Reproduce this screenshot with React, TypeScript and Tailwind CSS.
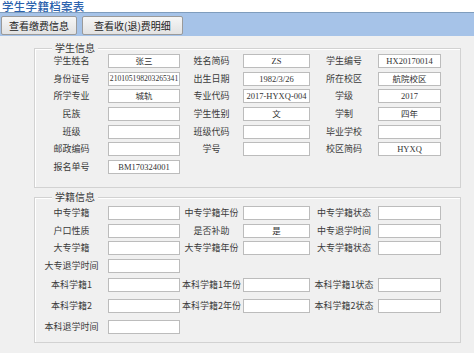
import React from 'react';

type Cell = { label: string; value?: string; small?: boolean };
type Row = { cells: Cell[]; mt?: string };

const STUDENT_ROWS: Row[] = [
  { cells: [{ label: '学生姓名', value: '张三' }, { label: '姓名简码', value: 'ZS' }, { label: '学生编号', value: 'HX20170014' }] },
  { cells: [{ label: '身份证号', value: '210105198203265341', small: true }, { label: '出生日期', value: '1982/3/26' }, { label: '所在校区', value: '航院校区' }], mt: 'mt-[4px]' },
  { cells: [{ label: '所学专业', value: '城轨' }, { label: '专业代码', value: '2017-HYXQ-004' }, { label: '学级', value: '2017' }], mt: 'mt-[3px]' },
  { cells: [{ label: '民族', value: '' }, { label: '学生性别', value: '文' }, { label: '学制', value: '四年' }], mt: 'mt-[4px]' },
  { cells: [{ label: '班级', value: '' }, { label: '班级代码', value: '' }, { label: '毕业学校', value: '' }], mt: 'mt-[4px]' },
  { cells: [{ label: '邮政编码', value: '' }, { label: '学号', value: '' }, { label: '校区简码', value: 'HYXQ' }], mt: 'mt-[3px]' },
  { cells: [{ label: '报名单号', value: 'BM170324001' }], mt: 'mt-[4px]' },
];

const STATUS_ROWS: Row[] = [
  { cells: [{ label: '中专学籍', value: '' }, { label: '中专学籍年份', value: '' }, { label: '中专学籍状态', value: '' }] },
  { cells: [{ label: '户口性质', value: '' }, { label: '是否补助', value: '是' }, { label: '中专退学时间', value: '' }], mt: 'mt-[4px]' },
  { cells: [{ label: '大专学籍', value: '' }, { label: '大专学籍年份', value: '' }, { label: '大专学籍状态', value: '' }], mt: 'mt-[3px]' },
  { cells: [{ label: '大专退学时间', value: '' }], mt: 'mt-[4px]' },
  { cells: [{ label: '本科学籍1', value: '' }, { label: '本科学籍1年份', value: '' }, { label: '本科学籍1状态', value: '' }], mt: 'mt-[5px]' },
  { cells: [{ label: '本科学籍2', value: '' }, { label: '本科学籍2年份', value: '' }, { label: '本科学籍2状态', value: '' }], mt: 'mt-[7px]' },
  { cells: [{ label: '本科退学时间', value: '' }], mt: 'mt-[7px]' },
];

const LABEL_W = ['w-[73px]', 'w-[63px]', 'w-[68px]'];
const INPUT_W = ['w-[72px]', 'w-[67px]', 'w-[63px]'];

function FormRow({ row }: { row: Row }) {
  return (
    <div className={`flex h-[14px] items-stretch ${row.mt ?? ''}`}>
      {row.cells.map((c, i) => (
        <React.Fragment key={c.label}>
          <div className={`${LABEL_W[i]} flex items-center justify-center whitespace-nowrap text-[9px] text-[#3a3a3a]`}>
            {c.label}
          </div>
          <div
            className={`${INPUT_W[i]} flex items-center justify-center overflow-hidden whitespace-nowrap border border-[#bcbcbc] bg-white text-[#333] font-['Liberation_Serif','Noto_Sans_CJK_SC',serif] ${
              c.small ? 'text-[7.6px]' : 'text-[8.5px]'
            }`}
          >
            {c.value}
          </div>
        </React.Fragment>
      ))}
    </div>
  );
}

function GroupBox({ title, className, children }: { title: string; className: string; children: React.ReactNode }) {
  return (
    <div className={`relative ml-[34px] w-[427px] border border-[#d2d2d2] shadow-[inset_1px_1px_0_#ffffff] ${className}`}>
      <span className="absolute -top-[8px] left-[17px] bg-[#f0f0f0] px-[3px] text-[10px] leading-[14px] text-[#3a3a3a]">
        {title}
      </span>
      {children}
    </div>
  );
}

export default function App() {
  return (
    <div className="h-[353px] w-[474px] overflow-hidden bg-[#f0f0f0] font-['Noto_Sans_CJK_SC','Noto_Sans',sans-serif]">
      {/* title */}
      <div className="h-[12px] bg-white pl-[2px] text-[11.5px] font-medium leading-[12px] tracking-[0.3px] text-[#2b62ad]">学生学籍档案表</div>

      {/* toolbar */}
      <div className="flex h-[24px] items-center gap-[5px] border-t border-[#7f9dbd] bg-[#a6c3e8] pl-[1px] pt-[2px]">
        <button className="h-[19px] w-[76px] rounded-[2px] border border-[#9a9a9a] bg-gradient-to-b from-[#f6f6f6] to-[#e2e2e2] text-[10px] text-[#222]">
          查看缴费信息
        </button>
        <button className="h-[19px] w-[101px] rounded-[2px] border border-[#9a9a9a] bg-gradient-to-b from-[#f6f6f6] to-[#e2e2e2] text-[10px] text-[#222]">
          查看收(退)费明细
        </button>
      </div>

      <GroupBox title="学生信息" className="mt-[12px] pb-[13px] pt-[5px]">
        {STUDENT_ROWS.map((r, i) => (
          <FormRow key={i} row={r} />
        ))}
      </GroupBox>

      <GroupBox title="学籍信息" className="mt-[9px] pb-[8px] pt-[8px]">
        {STATUS_ROWS.map((r, i) => (
          <FormRow key={i} row={r} />
        ))}
      </GroupBox>
    </div>
  );
}
